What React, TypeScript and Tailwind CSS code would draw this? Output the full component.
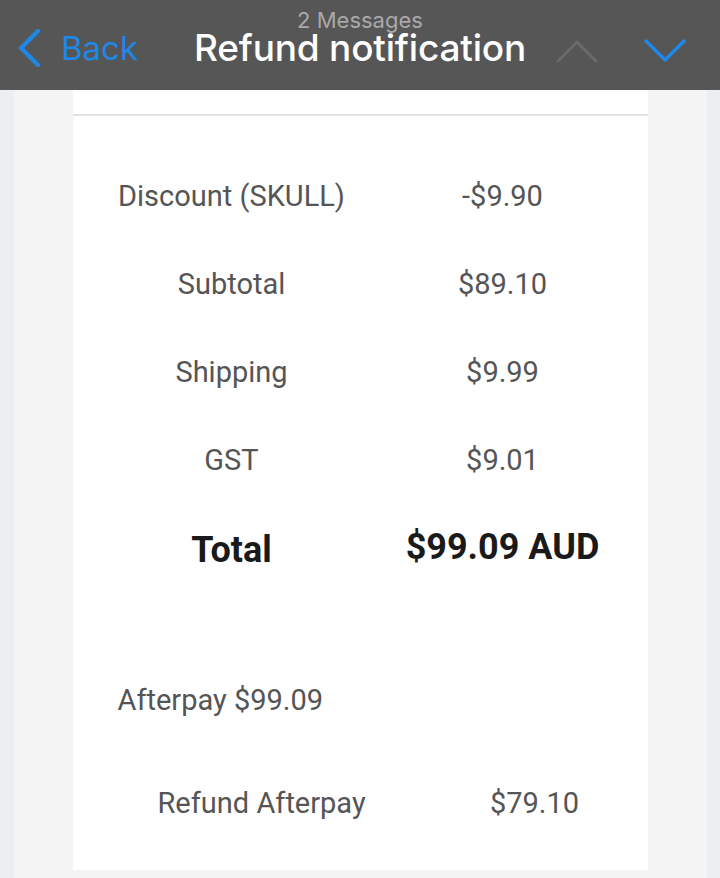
import React from "react";

const rows = [
  { label: "Discount (SKULL)", value: "-$9.90" },
  { label: "Subtotal", value: "$89.10" },
  { label: "Shipping", value: "$9.99" },
  { label: "GST", value: "$9.01" },
];

const App = () => {
  return (
    <div className="w-[720px] h-[878px] overflow-hidden bg-[#f4f4f4] flex flex-col font-['Roboto',sans-serif]">
      <header className="h-[90px] shrink-0 bg-[#565656] relative">
        <div className="absolute left-[17px] top-[29px] flex items-center">
          <svg width="24" height="38" viewBox="0 0 24 38" fill="none">
            <path d="M21 2 L4 19 L21 36" stroke="#1f87e6" strokeWidth="4.5" strokeLinecap="round" strokeLinejoin="round" />
          </svg>
        </div>
        <span className="absolute left-[61px] top-[26px] text-[33px] leading-[44px] text-[#1f87e6] font-['Inter',sans-serif]">
          Back
        </span>
        <div className="absolute inset-x-0 top-0 flex flex-col items-center font-['Inter',sans-serif]">
          <span className="text-[22px] leading-[26px] text-[#a9a9a9] mt-[7px]">2 Messages</span>
          <span className="text-[37px] leading-[42px] text-white font-medium -mt-[6px] tracking-[-0.2px]">Refund notification</span>
        </div>
        <svg className="absolute left-[556px] top-[39px]" width="42" height="24" viewBox="0 0 42 24" fill="none">
          <path d="M2 22 L21 3 L40 22" stroke="#6a6a6a" strokeWidth="3" strokeLinecap="round" strokeLinejoin="round" />
        </svg>
        <svg className="absolute left-[644px] top-[38px]" width="42" height="25" viewBox="0 0 42 25" fill="none">
          <path d="M2 3 L21 22 L40 3" stroke="#1f87e6" strokeWidth="3.5" strokeLinecap="round" strokeLinejoin="round" />
        </svg>
      </header>

      <div className="flex flex-1 min-h-0">
        <div className="w-[14px] bg-[#eceff2]" />
        <div className="flex-1 px-[59px]">
          <div className="bg-white h-[780px] flex flex-col text-[#555555]">
            <div className="h-[26px] border-b-2 border-[#e2e2e2]" />
            <div className="pl-[45px] pt-[36px] grid grid-cols-[228px_290px] gap-x-[12px] text-[29px] leading-[88px]">
              {rows.map((r) => (
                <React.Fragment key={r.label}>
                  <div className="text-center whitespace-nowrap">{r.label}</div>
                  <div className="text-center whitespace-nowrap">{r.value}</div>
                </React.Fragment>
              ))}
              <div className="text-center text-[36px] font-bold text-[#1a1a1a] leading-[86px] pt-[3px]">Total</div>
              <div className="text-center text-[36px] font-bold text-[#1a1a1a] leading-[86px] whitespace-nowrap">
                $99.09 AUD
              </div>
            </div>
            <div className="pl-[45px] mt-[87px] text-[29px] leading-[40px]">Afterpay $99.09</div>
            <div className="flex mt-[63px] text-[29px] leading-[40px]">
              <div className="w-[378px] pl-[85px] whitespace-nowrap">Refund Afterpay</div>
              <div className="w-[168px] text-center">$79.10</div>
            </div>
          </div>
        </div>
        <div className="w-[14px] bg-[#eceff2]" />
      </div>
    </div>
  );
};

export default App;
